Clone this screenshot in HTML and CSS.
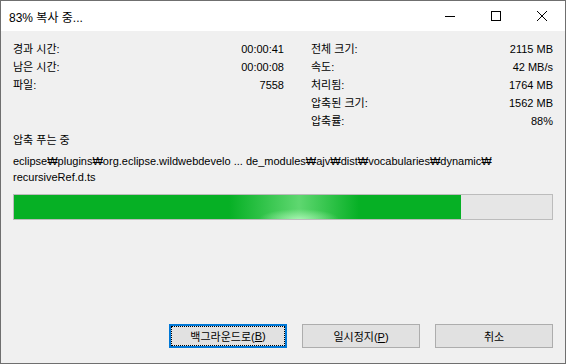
FILE: index.html
```html
<!DOCTYPE html>
<html lang="ko">
<head>
<meta charset="UTF-8">
<title>83% 복사 중...</title>
<link rel="stylesheet" href="styles.css">
</head>
<body>
<div class="window">
  <div class="titlebar">
    <span class="title">83% 복사 중...</span>
    <div class="controls">
      <span class="ctl"><svg width="12" height="12" viewBox="0 0 12 12"><path d="M1 6.5h10" stroke="#000" stroke-width="1"/></svg></span>
      <span class="ctl"><svg width="12" height="12" viewBox="0 0 12 12"><rect x="1.5" y="1.5" width="9" height="9" fill="none" stroke="#000" stroke-width="1"/></svg></span>
      <span class="ctl"><svg width="12" height="12" viewBox="0 0 12 12"><path d="M1 1l10 10M11 1L1 11" stroke="#000" stroke-width="1"/></svg></span>
    </div>
  </div>

  <div class="content">
    <div class="stats">
      <div class="col left">
        <div class="row"><span>경과 시간:</span><span>00:00:41</span></div>
        <div class="row"><span>남은 시간:</span><span>00:00:08</span></div>
        <div class="row"><span>파일:</span><span>7558</span></div>
      </div>
      <div class="col right">
        <div class="row"><span>전체 크기:</span><span>2115 MB</span></div>
        <div class="row"><span>속도:</span><span>42 MB/s</span></div>
        <div class="row"><span>처리됨:</span><span>1764 MB</span></div>
        <div class="row"><span>압축된 크기:</span><span>1562 MB</span></div>
        <div class="row"><span>압축률:</span><span>88%</span></div>
      </div>
    </div>

    <p class="status">압축 푸는 중</p>
    <p class="path">eclipse₩plugins₩org.eclipse.wildwebdevelo ... de_modules₩ajv₩dist₩vocabularies₩dynamic₩<br>recursiveRef.d.ts</p>

    <div class="progress">
      <div class="fill" style="width: 83%"></div>
    </div>
  </div>

  <div class="buttons">
    <button class="btn focus"><span>백그라운드로(<u>B</u>)</span></button>
    <button class="btn"><span>일시정지(<u>P</u>)</span></button>
    <button class="btn"><span>취소</span></button>
  </div>
</div>
</body>
</html>
```

FILE: styles.css
```css
html, body {
  margin: 0;
  padding: 0;
}
body {
  font-family: "Liberation Sans", "Noto Sans CJK KR", sans-serif;
  font-size: 11px;
  color: #000;
}
.window {
  width: 566px;
  height: 364px;
  box-sizing: border-box;
  border: 1px solid #6f6f6f;
  background: #f0f0f0;
  display: flex;
  flex-direction: column;
}
.titlebar {
  height: 30px;
  background: #fff;
  display: flex;
  align-items: center;
  justify-content: space-between;
}
.title {
  padding-left: 8px;
  font-size: 12px;
}
.controls {
  display: flex;
  height: 30px;
}
.ctl {
  width: 46px;
  display: flex;
  align-items: center;
  justify-content: center;
}
.content {
  padding: 9px 12px 0 12px;
}
.stats {
  display: flex;
  gap: 27px;
}
.col.left {
  width: 271px;
}
.col.right {
  flex: 1;
}
.row {
  display: flex;
  justify-content: space-between;
  height: 18px;
  line-height: 18px;
}
.status {
  margin: 1px 0 0 0;
  line-height: 18px;
}
.path {
  margin: 4px 0 0 0;
  line-height: 16px;
  font-family: "Liberation Sans", "DejaVu Sans", "Noto Sans CJK KR", sans-serif;
}
.progress {
  margin-top: 9px;
  height: 24px;
  border: 1px solid #bcbcbc;
  background: #e6e6e6;
}
.fill {
  height: 100%;
  background:
    radial-gradient(ellipse 40px 10px at 285px 100%, rgba(170, 245, 180, 0.9), rgba(170, 245, 180, 0) 100%),
    linear-gradient(to right, rgba(6, 176, 37, 0) 215px, rgba(110, 222, 125, 0.85) 285px, rgba(6, 176, 37, 0) 345px),
    #06b025;
}
.buttons {
  margin-top: auto;
  display: flex;
  justify-content: flex-end;
  gap: 15px;
  padding: 0 12px 15px 0;
}
.btn {
  width: 118px;
  height: 24px;
  margin: 0;
  padding: 0;
  font-family: inherit;
  font-size: 11px;
  color: #000;
  background: #e1e1e1;
  border: 1px solid #adadad;
  display: flex;
  align-items: center;
  justify-content: center;
}
.btn.focus {
  border: 2px solid #0078d7;
  padding: 1px;
}
.btn.focus span {
  display: flex;
  align-items: center;
  justify-content: center;
  width: 100%;
  height: 100%;
  box-sizing: border-box;
  outline: 1px dotted #000;
}
```
